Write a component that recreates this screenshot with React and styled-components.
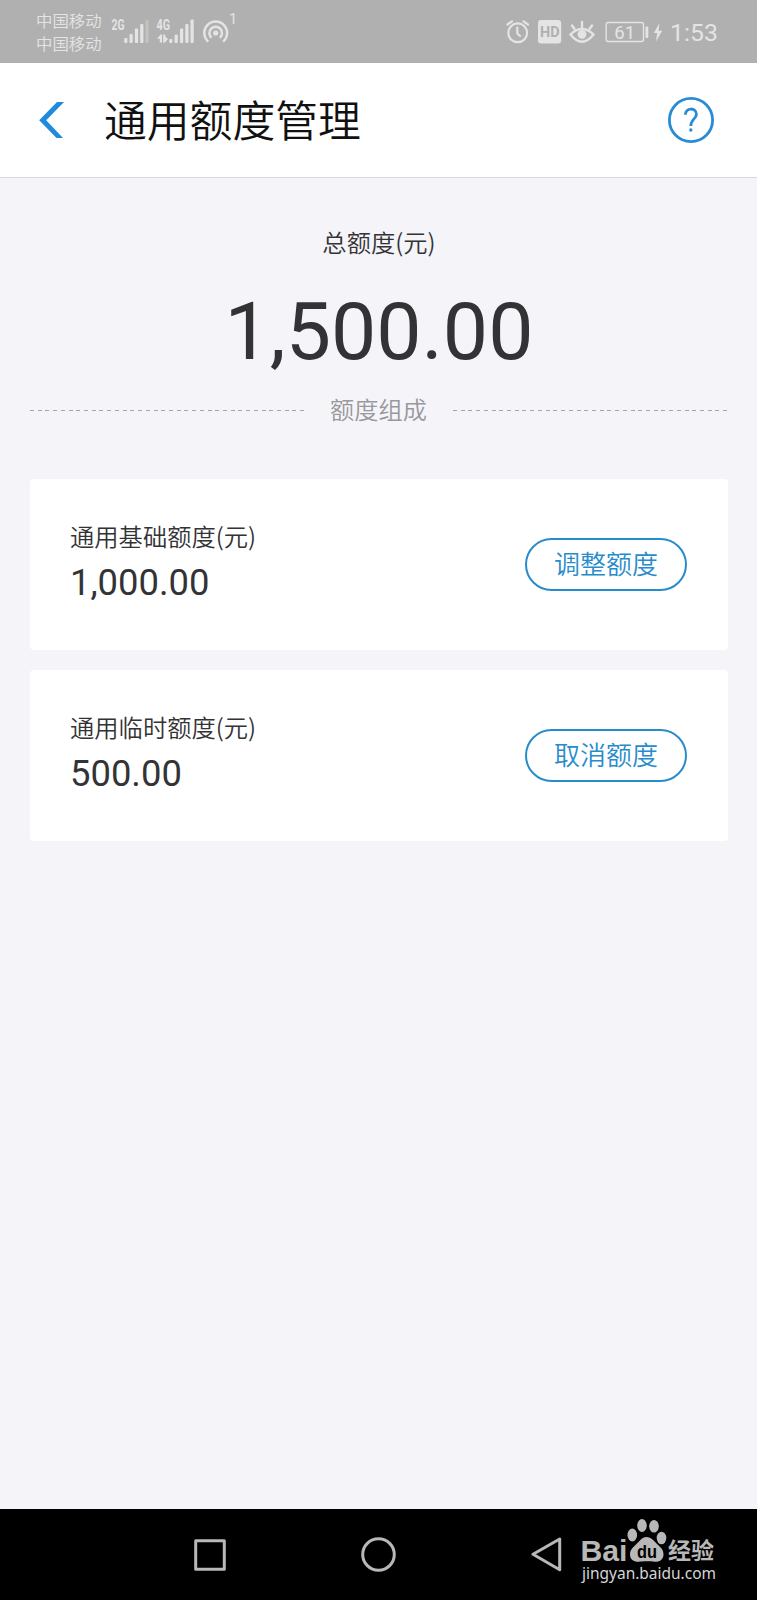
import React from 'react';
import styled, { createGlobalStyle } from 'styled-components';

const GlobalStyle = createGlobalStyle`
  * {
    box-sizing: border-box;
  }

  body {
    margin: 0;
    background: #f4f4f9;
    font-family: Roboto, 'Noto Sans CJK SC', sans-serif;
  }
`;

const Screen = styled.div`
  display: flex;
  flex-direction: column;
  width: 757px;
  height: 1600px;
  background: #f4f4f9;
  overflow: hidden;
`;

const StatusBar = styled.div`
  display: flex;
  justify-content: space-between;
  flex: none;
  height: 63px;
  padding: 0 40px 0 36px;
  background: #b0b0b0;
  color: #e4e4e4;
`;

const StatusGroup = styled.div`
  display: flex;
  align-items: center;
`;

const Carriers = styled.div`
  width: 72px;
  padding-top: 3px;
  font-size: 16.4px;
  line-height: 23px;
  font-weight: 350;
`;

const StatusIcon = styled.svg`
  display: block;
  flex: none;
  height: 63px;
  font-family: Roboto, sans-serif;
`;

const Clock = styled.span`
  width: 47px;
  margin-left: 7px;
  padding-top: 3px;
  font-size: 24.8px;
  line-height: 30px;
  white-space: nowrap;
`;

const Header = styled.header`
  display: flex;
  align-items: center;
  flex: none;
  height: 115px;
  padding: 0 43px 0 39px;
  background: #fff;
  border-bottom: 1px solid #d9d9dc;
`;

const Title = styled.h1`
  flex: 1;
  margin: 0 0 0 39px;
  padding-top: 3px;
  font-size: 42.8px;
  line-height: 60px;
  font-weight: 350;
  color: #111;
`;

const Content = styled.main`
  flex: 1;
  padding: 0 29px 0 30px;
`;

const Summary = styled.section`
  display: flex;
  flex-direction: column;
  align-items: center;
  padding-top: 48px;
  color: #333336;
`;

const Label = styled.div`
  height: 36px;
  font-family: 'Noto Sans CJK SC', sans-serif;
  font-size: 24.3px;
  line-height: 32px;
  font-weight: 350;
`;

const TotalAmount = styled.div`
  margin-top: 22px;
  font-size: 80.6px;
  line-height: 96px;
`;

const Divider = styled.div`
  display: flex;
  align-items: center;
  width: 100%;
  height: 36px;
  margin-top: 12px;
  font-size: 24.2px;
  line-height: 36px;
  font-weight: 350;
  color: #98989d;
`;

const DividerText = styled.span`
  flex: 1;
  padding-top: 1px;
  padding-right: 1px;
  text-align: center;
`;

const DashedLine = styled.span`
  width: 275px;
  height: 1px;
  margin-top: 1px;
  background: repeating-linear-gradient(to right, #a4a4a8 0 4px, transparent 4px 7.72px);
`;

const CardList = styled.div`
  display: flex;
  flex-direction: column;
  gap: 20px;
  margin-top: 51px;
`;

const Card = styled.section`
  display: flex;
  align-items: center;
  justify-content: space-between;
  height: 171px;
  padding: 0 41px 0 40px;
  background: #fff;
  border-radius: 4px;
`;

const CardInfo = styled.div`
  display: flex;
  flex-direction: column;
  padding-bottom: 4px;
  color: #333336;
`;

const CardAmount = styled.div`
  margin-top: 5px;
  font-size: 36.4px;
  line-height: 44px;
`;

const PillButton = styled.button`
  width: 162px;
  height: 53px;
  padding: 1px 0 0;
  border: 2px solid #278ccb;
  border-radius: 27px;
  background: #fff;
  color: #278ccb;
  font-family: inherit;
  font-size: 26px;
  line-height: 36px;
  font-weight: 350;
`;

const NavBar = styled.nav`
  display: flex;
  align-items: center;
  gap: 135px;
  flex: none;
  height: 91px;
  padding-left: 194px;
  background: #000;
`;

const NavIcon = styled.svg`
  display: block;
  flex: none;
  fill: none;
  stroke: #b8b8b8;
  stroke-width: 3;
  stroke-linejoin: round;
`;

const Watermark = styled.svg`
  display: block;
  flex: none;
  margin-left: -117px;
  overflow: visible;
`;

const limits = [
  { label: '通用基础额度(元)', amount: '1,000.00', action: '调整额度' },
  { label: '通用临时额度(元)', amount: '500.00', action: '取消额度' },
];

const SignalIcons = () => (
  <StatusIcon width="132" viewBox="108 0 132 63" fill="#e4e4e4">
    <text x="111.5" y="30" fontSize="14.5" fontWeight="700" textLength="13" lengthAdjust="spacingAndGlyphs">2G</text>
    <rect x="124.2" y="38" width="3.2" height="5" rx="1" />
    <rect x="129.5" y="34" width="3.2" height="9" rx="1" />
    <rect x="134.9" y="28.5" width="3.2" height="14.5" rx="1" />
    <rect x="140.2" y="24" width="3.2" height="19" rx="1" />
    <rect x="145.5" y="20" width="3.2" height="23" rx="1" opacity="0.35" />
    <text x="156.5" y="30" fontSize="14.5" fontWeight="700" textLength="13.5" lengthAdjust="spacingAndGlyphs">4G</text>
    <path d="M157 38.7 L160.5 34.5 H162 V42.5 H159.8 V38.7 Z M163.2 34.5 H165.2 V36.5 L168 39 L164.8 42.8 H163.2 Z" />
    <rect x="169.2" y="39" width="3.2" height="4" rx="1" />
    <rect x="174.6" y="34.5" width="3.2" height="8.5" rx="1" />
    <rect x="180" y="28.5" width="3.2" height="14.5" rx="1" />
    <rect x="185.3" y="24" width="3.2" height="19" rx="1" />
    <rect x="190.5" y="19.5" width="3.2" height="23.5" rx="1" />
    <g fill="none" stroke="#e4e4e4" strokeWidth="2.5">
      <path d="M208.3 41.6 A11.4 11.4 0 1 1 223.1 41.6" />
      <path d="M211.5 37.8 A6.3 6.3 0 1 1 219.9 37.8" />
    </g>
    <circle cx="215.7" cy="33" r="2.6" />
    <text x="229" y="24" fontSize="14.5">1</text>
  </StatusIcon>
);

const SystemIcons = () => (
  <StatusIcon width="158" viewBox="505 0 158 63" fill="#e4e4e4">
    <g fill="none" stroke="#e4e4e4" strokeWidth="2.2" strokeLinecap="round">
      <circle cx="517.7" cy="32.8" r="9.4" />
      <path d="M517.3 27.5 V33.5 L520 36" />
      <path d="M507.5 24.5 L512 21.3 M523.5 21.3 L528 24.5" />
    </g>
    <rect x="538" y="20" width="23.2" height="23.5" rx="3" />
    <text x="540" y="37.2" fontSize="15.5" fontWeight="700" fill="#b0b0b0" textLength="19.5" lengthAdjust="spacingAndGlyphs">HD</text>
    <g fill="none" stroke="#e4e4e4" strokeWidth="2.4" strokeLinecap="round">
      <path d="M570.5 34.5 Q582 23.5 593.5 34.5 Q582 49 570.5 34.5 Z" />
      <path d="M582 22 V27 M572 25.5 L574.5 29 M592 25.5 L589.5 29" />
    </g>
    <circle cx="582" cy="34.3" r="4.4" />
    <rect x="606.2" y="22.5" width="37.3" height="19" rx="2" fill="none" stroke="#e4e4e4" strokeWidth="1.4" />
    <rect x="645.5" y="26.5" width="2.8" height="11.5" rx="1" />
    <text x="614.3" y="38.6" fontSize="18.5">61</text>
    <path d="M659.5 23 L653.8 33 H657.2 L656 41.5 L662.2 30.8 H658.5 Z" />
  </StatusIcon>
);

const App = () => {
  return (
    <>
      <GlobalStyle />
      <Screen>
        <StatusBar>
          <StatusGroup>
            <Carriers>
              <div>中国移动</div>
              <div>中国移动</div>
            </Carriers>
            <SignalIcons />
          </StatusGroup>
          <StatusGroup>
            <SystemIcons />
            <Clock>1:53</Clock>
          </StatusGroup>
        </StatusBar>

        <Header>
          <svg width="26" height="38" viewBox="0 0 26 38" fill="#1f8ade">
            <path d="M18 1 H25 L7.2 19.3 L24 37 H17.5 L0.2 19.3 Z" />
          </svg>
          <Title>通用额度管理</Title>
          <svg width="46" height="46" viewBox="0 0 46 46" fill="none" stroke="#278cd5">
            <circle cx="23" cy="23" r="21.6" strokeWidth="2.8" />
            <path d="M17.4 17.8 C17.4 10.2 28.4 10.2 28.4 17.2 C28.4 22 22.8 22 22.8 29" strokeWidth="2.8" />
            <circle cx="22.8" cy="33" r="1.7" fill="#278cd5" stroke="none" />
          </svg>
        </Header>

        <Content>
          <Summary>
            <Label>总额度(元)</Label>
            <TotalAmount>1,500.00</TotalAmount>
            <Divider>
              <DashedLine />
              <DividerText>额度组成</DividerText>
              <DashedLine />
            </Divider>
          </Summary>

          <CardList>
            {limits.map((item) => (
              <Card key={item.label}>
                <CardInfo>
                  <Label>{item.label}</Label>
                  <CardAmount>{item.amount}</CardAmount>
                </CardInfo>
                <PillButton>{item.action}</PillButton>
              </Card>
            ))}
          </CardList>
        </Content>

        <NavBar>
          <NavIcon width="32" height="32" viewBox="0 0 32 32">
            <rect x="1.7" y="1.7" width="28.6" height="28.6" />
          </NavIcon>
          <NavIcon width="35" height="35" viewBox="0 0 35 35">
            <circle cx="17.5" cy="17.5" r="15.8" />
          </NavIcon>
          <NavIcon width="31" height="35" viewBox="0 0 31 35">
            <path d="M2 17.3 L28.7 2 V32.7 Z" />
          </NavIcon>
          <Watermark width="140" height="71" viewBox="580 1519 140 71" fill="#b8b8b8">
            <text x="580.5" y="1560.5" fontFamily="Liberation Sans, sans-serif" fontSize="30" fontWeight="700" textLength="47" lengthAdjust="spacingAndGlyphs">Bai</text>
            <ellipse cx="632.3" cy="1535" rx="4.8" ry="6.5" />
            <ellipse cx="642" cy="1525.5" rx="4.8" ry="6.5" />
            <ellipse cx="654" cy="1526.3" rx="4.8" ry="6.3" />
            <ellipse cx="661.5" cy="1538" rx="4.8" ry="6.3" />
            <path d="M646.5 1537 C651.5 1537 654 1541 657 1544 C661.5 1548 663.5 1550 663.5 1554.5 C663.5 1560 659 1562 654.5 1561.8 C651 1561 642 1561 638.5 1561.8 C634 1562 630 1559.5 630 1554.5 C630 1549.5 633 1547.5 636.5 1544 C640 1541 641.5 1537 646.5 1537 Z" />
            <text x="637" y="1558" fill="#000" fontFamily="Liberation Sans, sans-serif" fontSize="18" fontWeight="700" textLength="20" lengthAdjust="spacingAndGlyphs">du</text>
            <text x="668" y="1559" fontFamily="Noto Sans CJK SC, sans-serif" fontSize="23" fontWeight="700" textLength="46">经验</text>
            <text x="582" y="1579" fill="#d6d6d6" fontFamily="Noto Sans, sans-serif" fontSize="16.5" textLength="134" lengthAdjust="spacingAndGlyphs">jingyan.baidu.com</text>
          </Watermark>
        </NavBar>
      </Screen>
    </>
  );
};

export default App;
